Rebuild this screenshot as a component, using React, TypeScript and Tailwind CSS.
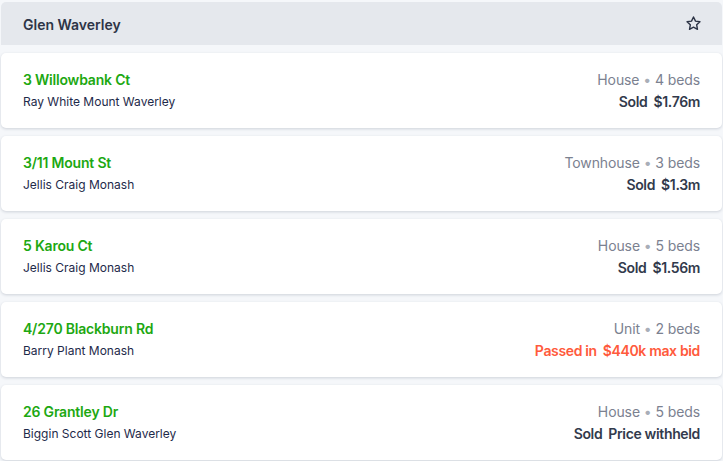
import React from 'react';

type Listing = {
  address: string;
  agent: string;
  type: string;
  beds: number;
  status: string;
  price: string;
  passed?: boolean;
};

const listings: Listing[] = [
  { address: '3 Willowbank Ct', agent: 'Ray White Mount Waverley', type: 'House', beds: 4, status: 'Sold', price: '$1.76m' },
  { address: '3/11 Mount St', agent: 'Jellis Craig Monash', type: 'Townhouse', beds: 3, status: 'Sold', price: '$1.3m' },
  { address: '5 Karou Ct', agent: 'Jellis Craig Monash', type: 'House', beds: 5, status: 'Sold', price: '$1.56m' },
  { address: '4/270 Blackburn Rd', agent: 'Barry Plant Monash', type: 'Unit', beds: 2, status: 'Passed in', price: '$440k max bid', passed: true },
  { address: '26 Grantley Dr', agent: 'Biggin Scott Glen Waverley', type: 'House', beds: 5, status: 'Sold', price: 'Price withheld' },
];

function StarIcon() {
  return (
    <svg width="17" height="17" viewBox="0 0 24 24" fill="none" stroke="#2d3446" strokeWidth="2" strokeLinejoin="round">
      <path d="M12 2.8l2.8 5.8 6.3.9-4.6 4.4 1.1 6.3L12 17.2l-5.6 3 1.1-6.3-4.6-4.4 6.3-.9z" />
    </svg>
  );
}

function ListingCard({ item }: { item: Listing }) {
  return (
    <div className="bg-white rounded-[5px] shadow-[0_1px_3px_rgba(30,42,74,0.18)] h-[75px] pl-[22px] pr-[22px] flex items-center justify-between">
      <div className="flex flex-col gap-[5px]">
        <span className="text-[14px] font-semibold text-[#1da812] leading-[17px] tracking-[-0.2px]">{item.address}</span>
        <span className="text-[12px] text-[#1e2a4a] leading-[17px]">{item.agent}</span>
      </div>
      <div className="flex flex-col items-end gap-[5px]">
        <span className="text-[14px] text-[#7b8190] leading-[17px] tracking-[-0.1px]">
          {item.type} <span className="text-[#a9aeb8]">•</span> {item.beds} beds
        </span>
        <span className={`text-[14px] font-semibold leading-[17px] tracking-[-0.35px] ${item.passed ? 'text-[#ff5a3c]' : 'text-[#323a4c]'}`}>
          {item.status}
          <span className="ml-[6px]">{item.price}</span>
        </span>
      </div>
    </div>
  );
}

export default function App() {
  return (
    <div className="w-[723px] h-[461px] bg-[#f5f7fa] pt-[2px] pl-[1px] pr-[1px] font-['Inter',sans-serif] overflow-hidden">
      <div className="h-[43px] bg-[#e5e8ed] rounded-t-[5px] pl-[22px] pr-[20px] flex items-center justify-between">
        <span className="text-[14px] font-semibold text-[#2d3446] mt-[1px]">Glen Waverley</span>
        <StarIcon />
      </div>
      <div className="mt-[8px] flex flex-col gap-[8px]">
        {listings.map((l) => (
          <ListingCard key={l.address} item={l} />
        ))}
      </div>
    </div>
  );
}
